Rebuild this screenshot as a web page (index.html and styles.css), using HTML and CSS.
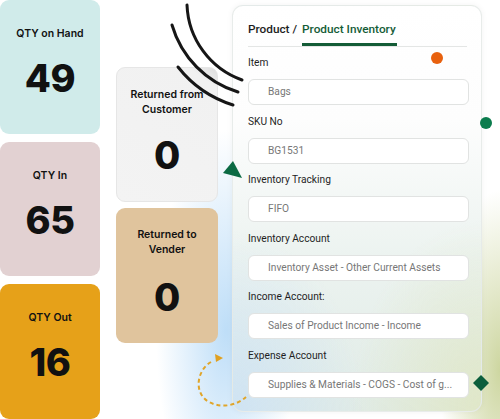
FILE: index.html
```html
<!DOCTYPE html>
<html>
<head>
<meta charset="utf-8">
<link rel="stylesheet" href="styles.css">
</head>
<body>
<div class="stage">
  <div class="col-left">
    <div class="card card-hand"><div class="card-title">QTY on Hand</div><div class="card-num">49</div></div>
    <div class="card card-in"><div class="card-title">QTY In</div><div class="card-num">65</div></div>
    <div class="card card-out"><div class="card-title">QTY Out</div><div class="card-num">16</div></div>
  </div>
  <div class="col-mid">
    <div class="card card-cust"><div class="card-title">Returned from<br>Customer</div><div class="card-num">0</div></div>
    <div class="card card-vend"><div class="card-title">Returned to<br>Vender</div><div class="card-num">0</div></div>
  </div>
  <div class="panel">
    <div class="tabs">
      <span class="crumb">Product /</span>
      <span class="tab-active">Product Inventory</span>
    </div>
    <div class="fields">
      <div class="field"><div class="label">Item</div><div class="input">Bags</div></div>
      <div class="field"><div class="label">SKU No</div><div class="input">BG1531</div></div>
      <div class="field"><div class="label">Inventory Tracking</div><div class="input">FIFO</div></div>
      <div class="field"><div class="label">Inventory Account</div><div class="input">Inventory Asset - Other Current Assets</div></div>
      <div class="field"><div class="label">Income Account:</div><div class="input">Sales of Product Income - Income</div></div>
      <div class="field"><div class="label">Expense Account</div><div class="input">Supplies &amp; Materials - COGS - Cost of g...</div></div>
    </div>
  </div>
  <svg class="decor" width="500" height="419" viewBox="0 0 500 419">
    <g fill="none" stroke="#161616" stroke-width="3" stroke-linecap="round">
      <path d="M187,5 A83,83 0 0,0 242,80"/>
      <path d="M172,25 A99,99 0 0,0 238,92"/>
      <path d="M178,67 A113,113 0 0,0 233,105"/>
    </g>
    <polygon points="233,161 223,173 242,178" fill="#0b6a43"/>
    <circle cx="437" cy="58" r="6" fill="#e8610e"/>
    <circle cx="486" cy="123" r="6" fill="#0b7c4d"/>
    <polygon points="481,375 489,383 481,391 473,383" fill="#0b5e3c"/>
    <path d="M211,362 C197,370 193,393 209,402 C222,409 237,405 246,397" fill="none" stroke="#e0a52a" stroke-width="2" stroke-dasharray="4 3"/>
    <polygon points="215,354 223,358 216,362" fill="#e0a020"/>
  </svg>
</div>
</body>
</html>
```
FILE: styles.css
```css
html, body { margin: 0; padding: 0; }
body { background: #fff; }
.stage {
  position: relative;
  width: 500px;
  height: 419px;
  overflow: hidden;
  display: flex;
  align-items: flex-start;
  background:
    radial-gradient(ellipse 70px 200px at 226px 330px, rgba(190,222,248,1), rgba(190,222,248,0) 100%),
    radial-gradient(ellipse 60px 180px at 500px 370px, rgba(205,214,160,1), rgba(205,214,160,0) 100%),
    #fff;
}
.col-left { display: flex; flex-direction: column; gap: 8px; width: 100px; }
.col-mid { display: flex; flex-direction: column; gap: 6px; width: 102px; margin-left: 16px; margin-top: 67px; }
.card {
  box-sizing: border-box;
  border-radius: 9px;
  display: flex;
  flex-direction: column;
  align-items: center;
  font-family: "Inter", "Open Sans", sans-serif;
  color: #111;
}
.col-left .card { height: 134px; padding-top: 26px; }
.col-left .card-out { height: 135px; }
.card-title { font-size: 10.5px; font-weight: 600; line-height: 15px; text-align: center; }
.card-num { font-size: 38px; font-weight: 800; line-height: 44px; margin-top: 15px; letter-spacing: -0.5px; }
.card-hand { background: #d0ebea; }
.card-in { background: #e2d1d2; }
.card-out { background: #e6a119; }
.col-mid .card { height: 135px; padding-top: 19px; }
.card-cust { background: linear-gradient(215deg, #dcdcdc 0%, #f1f1f1 10%, #f3f3f3 100%); border: 1px solid #e6e6e6; }
.card-vend { background: #e0c49d; }
.col-mid .card-num { margin-top: 16px; }
.card-vend .card-num { margin-top: 18px; }
.panel {
  box-sizing: border-box;
  width: 250px;
  height: 407px;
  margin-left: 14px;
  margin-top: 5px;
  border-radius: 11px;
  padding: 14px 14px 0 15px;
  border: 1px solid rgba(230,234,232,0.9);
  box-shadow: 0 0 6px rgba(0,0,0,0.05);
  font-family: "Roboto", "Liberation Sans", sans-serif;
  background:
    radial-gradient(ellipse 130px 180px at 0% 100%, rgba(206,227,244,0.95), rgba(206,227,244,0)),
    radial-gradient(ellipse 130px 190px at 100% 100%, rgba(224,231,200,1), rgba(224,231,200,0)),
    linear-gradient(180deg, #ffffff 0%, #fdfdfd 28%, #ecf3f0 62%, #e0ebe6 100%);
}
.tabs {
  display: flex;
  align-items: flex-start;
  height: 26px;
  border-bottom: 1px solid #e4e6e5;
  font-size: 11.8px;
  font-weight: 500;
  line-height: 18px;
}
.crumb { color: #1d1d1d; margin-right: 5px; }
.tab-active { color: #145c37; height: 23px; border-bottom: 3px solid #145c37; padding-right: 1px; }
.fields { display: flex; flex-direction: column; gap: 9.6px; margin-top: 9px; width: 221px; }
.field { display: flex; flex-direction: column; }
.label { font-size: 10.2px; line-height: 14px; color: #1f1f1f; margin-bottom: 9px; }
.input {
  box-sizing: border-box;
  height: 26px;
  border: 1px solid #e1e3e2;
  border-radius: 6px;
  background: #fff;
  padding-left: 19px;
  font-size: 10.2px;
  line-height: 24px;
  color: #777;
  white-space: nowrap;
  overflow: hidden;
}
.decor { position: absolute; left: 0; top: 0; pointer-events: none; }
```
